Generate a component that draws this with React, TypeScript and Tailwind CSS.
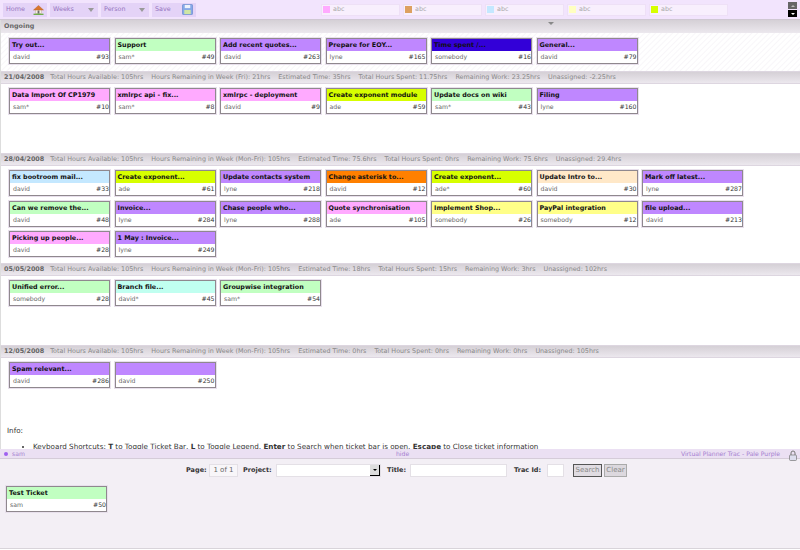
import React from 'react';

type Ticket = { title: string; owner: string; id: number; color: string };

const purple = 'bg-[#bf87ff]';
const green = 'bg-[#c1ffc1]';
const pink = 'bg-[#ffaaff]';
const lime = 'bg-[#d7ff00]';
const blue = 'bg-[#c4e8ff]';
const orange = 'bg-[#ff8000]';
const yellow = 'bg-[#ffff88]';
const peach = 'bg-[#ffe8c8]';
const aqua = 'bg-[#c0fff0]';
const indigo = 'bg-[#3300d8]';

const weeks: { label: string; stats: string[]; height: string; tickets: Ticket[] }[] = [
  {
    label: '21/04/2008',
    stats: ['Total Hours Available: 105hrs', 'Hours Remaining in Week (Fri): 21hrs', 'Estimated Time: 35hrs', 'Total Hours Spent: 11.75hrs', 'Remaining Work: 23.25hrs', 'Unassigned: -2.25hrs'],
    height: 'h-[69px]',
    tickets: [
      { title: 'Data Import Of CP1979', owner: 'sam*', id: 10, color: pink },
      { title: 'xmlrpc api - fix...', owner: 'sam*', id: 8, color: pink },
      { title: 'xmlrpc - deployment', owner: 'david', id: 9, color: pink },
      { title: 'Create exponent module', owner: 'ade', id: 59, color: lime },
      { title: 'Update docs on wiki', owner: 'sam*', id: 43, color: green },
      { title: 'Filing', owner: 'lyne', id: 160, color: purple },
    ],
  },
  {
    label: '28/04/2008',
    stats: ['Total Hours Available: 105hrs', 'Hours Remaining in Week (Mon-Fri): 105hrs', 'Estimated Time: 75.6hrs', 'Total Hours Spent: 0hrs', 'Remaining Work: 75.6hrs', 'Unassigned: 29.4hrs'],
    height: 'h-[97px]',
    tickets: [
      { title: 'fix bootroom mail...', owner: 'david', id: 33, color: blue },
      { title: 'Create exponent...', owner: 'ade', id: 61, color: lime },
      { title: 'Update contacts system', owner: 'lyne', id: 218, color: purple },
      { title: 'Change asterisk to...', owner: 'david', id: 12, color: orange },
      { title: 'Create exponent...', owner: 'ade*', id: 60, color: lime },
      { title: 'Update Intro to...', owner: 'david', id: 30, color: peach },
      { title: 'Mark off latest...', owner: 'lyne', id: 287, color: purple },
      { title: 'Can we remove the...', owner: 'david', id: 48, color: green },
      { title: 'Invoice...', owner: 'lyne', id: 284, color: purple },
      { title: 'Chase people who...', owner: 'lyne', id: 288, color: purple },
      { title: 'Quote synchronisation', owner: 'ade', id: 105, color: pink },
      { title: 'Implement Shop...', owner: 'somebody', id: 26, color: yellow },
      { title: 'PayPal integration', owner: 'somebody', id: 12, color: yellow },
      { title: 'file upload...', owner: 'david', id: 213, color: purple },
      { title: 'Picking up people...', owner: 'david', id: 28, color: pink },
      { title: '1 May : Invoice...', owner: 'lyne', id: 249, color: purple },
    ],
  },
  {
    label: '05/05/2008',
    stats: ['Total Hours Available: 105hrs', 'Hours Remaining in Week (Mon-Fri): 105hrs', 'Estimated Time: 18hrs', 'Total Hours Spent: 15hrs', 'Remaining Work: 3hrs', 'Unassigned: 102hrs'],
    height: 'h-[69px]',
    tickets: [
      { title: 'Unified error...', owner: 'somebody', id: 28, color: green },
      { title: 'Branch file...', owner: 'david*', id: 45, color: aqua },
      { title: 'Groupwise integration', owner: 'sam*', id: 54, color: green },
    ],
  },
  {
    label: '12/05/2008',
    stats: ['Total Hours Available: 105hrs', 'Hours Remaining in Week (Mon-Fri): 105hrs', 'Estimated Time: 0hrs', 'Total Hours Spent: 0hrs', 'Remaining Work: 0hrs', 'Unassigned: 105hrs'],
    height: 'h-[49px]',
    tickets: [
      { title: 'Spam relevant...', owner: 'david', id: 286, color: purple },
      { title: '', owner: 'david', id: 250, color: purple },
    ],
  },
];

const ongoing: Ticket[] = [
  { title: 'Try out...', owner: 'david', id: 93, color: purple },
  { title: 'Support', owner: 'sam*', id: 49, color: green },
  { title: 'Add recent quotes...', owner: 'david', id: 263, color: purple },
  { title: 'Prepare for EOY...', owner: 'lyne', id: 165, color: purple },
  { title: 'Time spent /...', owner: 'somebody', id: 16, color: indigo },
  { title: 'General...', owner: 'david', id: 79, color: purple },
];

const legend = ['bg-[#ffaaff]', 'bg-[#dda060]', 'bg-[#c4e8ff]', 'bg-[#ffffc0]', 'bg-[#d7ff00]'];

function Card({ ticket }: { ticket: Ticket }) {
  return (
    <div className="h-[26px] w-[101px] shrink-0 border border-[#8f888e] bg-white shadow-[0_0_0_1px_#e8e0ec]">
      <div className={`h-[12px] truncate px-[2px] text-[6.4px] leading-[12px] font-bold text-[#111] ${ticket.color}`}>
        {ticket.title}
      </div>
      <div className="flex h-[12px] items-center justify-between pr-0 pl-[3px] text-[6.2px] leading-[12px]">
        <span className="text-[#666]">{ticket.owner}</span>
        <span className="text-[#333]">#{ticket.id}</span>
      </div>
    </div>
  );
}

function SectionHeader({ label, stats }: { label: string; stats: string[] }) {
  return (
    <div className="flex h-[13px] items-center gap-[8px] border-y border-[#ddd6e0] bg-linear-to-b from-[#d5d0d6] to-[#ece8ee] pl-[3px] text-[6.4px] whitespace-nowrap text-[#888]">
      <span className="-mr-[2px] font-bold text-[#666]">{label}</span>
      {stats.map((s) => (
        <span key={s}>{s}</span>
      ))}
    </div>
  );
}

function HomeIcon() {
  return (
    <svg width="11" height="10" viewBox="0 0 12 11">
      <rect x="2.5" y="5" width="7" height="4.5" fill="#f5efe6" stroke="#b9a78e" strokeWidth="0.5" />
      <rect x="5" y="6" width="2" height="3.5" fill="#6a6a6a" />
      <path d="M6 0.5 L11.5 5.5 L0.5 5.5 Z" fill="#d9772e" stroke="#b5642a" strokeWidth="0.5" />
      <rect x="0.5" y="9.5" width="11" height="1.5" fill="#6fae4a" />
    </svg>
  );
}

function SaveIcon() {
  return (
    <svg width="11" height="11" viewBox="0 0 12 12">
      <rect x="0.5" y="0.5" width="11" height="11" rx="1" fill="#86a8e8" stroke="#5f83c8" strokeWidth="0.7" />
      <rect x="3" y="1" width="6" height="3.5" fill="#eef3fb" />
      <rect x="2.5" y="6.5" width="7" height="4.5" fill="#cfe6a4" />
    </svg>
  );
}

function ToolButton({ label, width, children }: { label: string; width: string; children?: React.ReactNode }) {
  return (
    <div className={`flex h-[14px] items-center justify-between bg-[#e4d3f7] pr-[3px] pl-[3px] text-[6.4px] text-[#9573c0] ${width}`}>
      <span>{label}</span>
      {children}
    </div>
  );
}

function Caret() {
  return <span className="mr-[1px] h-0 w-0 border-x-[3px] border-t-[4px] border-x-transparent border-t-[#999]" />;
}

export default function App() {
  return (
    <div className="flex h-[550px] w-[800px] flex-col overflow-hidden bg-white font-['DejaVu_Sans',sans-serif]">
      <div className="flex h-[20px] shrink-0 items-center border-b border-[#cfc8d2] bg-[#f2e4fd]">
        <div className="flex gap-[3px] pl-[3px]">
          <ToolButton label="Home" width="w-[44px]"><HomeIcon /></ToolButton>
          <ToolButton label="Weeks" width="w-[48px]"><Caret /></ToolButton>
          <ToolButton label="Person" width="w-[48px]"><Caret /></ToolButton>
          <ToolButton label="Save" width="w-[44px]"><SaveIcon /></ToolButton>
        </div>
        <div className="ml-[125px] flex gap-[3px]">
          {legend.map((c) => (
            <div key={c} className="flex h-[12px] w-[79px] items-center gap-[3px] border border-[#eee0f6] bg-[#f8effd] pl-[1px] text-[6.4px] text-[#aaa]">
              <span className={`h-[7px] w-[7px] ${c}`} />
              abc
            </div>
          ))}
        </div>
        <div className="ml-[60px] flex flex-col gap-[1px]">
          <div className="flex h-[7px] w-[9px] items-center justify-center bg-[#666]">
            <span className="h-0 w-0 border-x-[2px] border-b-[2px] border-x-transparent border-b-[#bbb]" />
          </div>
          <div className="flex h-[7px] w-[9px] items-center justify-center bg-black">
            <span className="h-0 w-0 border-x-[2px] border-t-[2px] border-x-transparent border-t-white" />
          </div>
        </div>
      </div>

      <div className="min-h-0 flex-1 overflow-hidden border-l border-[#ddd]">
        <div className="relative flex h-[13px] items-center bg-linear-to-b from-[#d5d0d6] to-[#ece8ee] pl-[3px] text-[6.4px] font-bold text-[#666]">
          Ongoing
          <span className="absolute top-[2px] left-[547px] h-0 w-0 border-x-[3px] border-t-[3px] border-x-transparent border-t-[#888]" />
        </div>
        <div className="flex h-[38px] gap-x-[4.5px] bg-[repeating-linear-gradient(135deg,#ffffff_0,#ffffff_2px,#f8f6f9_3px,#ffffff_4px)] pt-[5px] pl-[8px]">
          {ongoing.map((t) => (
            <Card key={t.id} ticket={t} />
          ))}
        </div>
        {weeks.map((w) => (
          <div key={w.label}>
            <SectionHeader label={w.label} stats={w.stats} />
            <div className={`flex flex-wrap content-start gap-x-[4.5px] gap-y-[4.5px] pt-[4px] pl-[8px] ${w.height}`}>
              {w.tickets.map((t) => (
                <Card key={t.id + t.title} ticket={t} />
              ))}
            </div>
          </div>
        ))}
        <div className="pt-[19px] pl-[6px] text-[7.2px] text-[#333]">
          <p>Info:</p>
          <ul className="mt-[5px] ml-[26px] list-disc">
            <li>
              Keyboard Shortcuts: <b>T</b> to Toggle Ticket Bar, <b>L</b> to Toggle Legend, <b>Enter</b> to Search when ticket bar is open, <b>Escape</b> to Close ticket information
            </li>
          </ul>
        </div>
      </div>

      <div className="relative flex h-[10px] shrink-0 items-center border-b border-[#d5ccd9] bg-[#ebe0f3] text-[6.1px] text-[#a57fd0]">
        <div className="flex w-[396px] items-center gap-[4px] pl-[4px]">
          <span className="h-[4px] w-[4px] rounded-full bg-[#a060f0]" />
          sam
        </div>
        <span>hide</span>
        <div className="flex flex-1 items-center justify-end pr-[20px]">
          Virtual Planner Trac - Pale Purple
        </div>
        <svg width="8" height="11" viewBox="0 0 8 11" className="absolute top-[1px] right-[3px]">
          <path d="M2 5 V3 a2 2 0 0 1 4 0 V5" fill="none" stroke="#777" />
          <rect x="0.5" y="5" width="7" height="5.5" rx="1" fill="#dde" stroke="#777" strokeWidth="0.7" />
        </svg>
      </div>

      <div className="mb-[1px] h-[90px] shrink-0 border-b border-[#d8d4da] bg-[#f3eff5] px-[6px]">
        <div className="flex h-[23px] items-center pl-[180px] text-[6.5px] text-[#333]">
          <b className="w-[23px]">Page:</b>
          <span className="flex h-[13px] w-[29px] items-center justify-center border border-[#e4e0e6] bg-[#f8f6f9] text-[7px] text-[#666]">1 of 1</span>
          <b className="ml-[5px] w-[33px]">Project:</b>
          <div className="flex h-[13px] w-[105px] justify-end border border-[#e4e0e6] bg-white">
            <span className="flex w-[10px] items-center justify-center border-r border-b border-black bg-[#ddd]">
              <span className="h-0 w-0 border-x-[2px] border-t-[2px] border-x-transparent border-t-black" />
            </span>
          </div>
          <b className="ml-[6px] w-[23px]">Title:</b>
          <span className="h-[13px] w-[97px] border border-[#e4e0e6] bg-white" />
          <b className="ml-[7px] w-[32.5px]">Trac Id:</b>
          <span className="h-[13px] w-[17px] border border-[#e4e0e6] bg-white" />
          <span className="ml-[9.5px] flex h-[13px] w-[29px] items-center justify-center border border-[#555] bg-[#e0dce2] text-[7px] text-[#888]">Search</span>
          <span className="ml-[2px] flex h-[13px] w-[23px] items-center justify-center border border-[#aaa] bg-[#dcd8de] text-[7px] text-[#888]">Clear</span>
        </div>
        <div className="pt-[4px]">
          <Card ticket={{ title: 'Test Ticket', owner: 'sam', id: 50, color: green }} />
        </div>
      </div>
    </div>
  );
}
